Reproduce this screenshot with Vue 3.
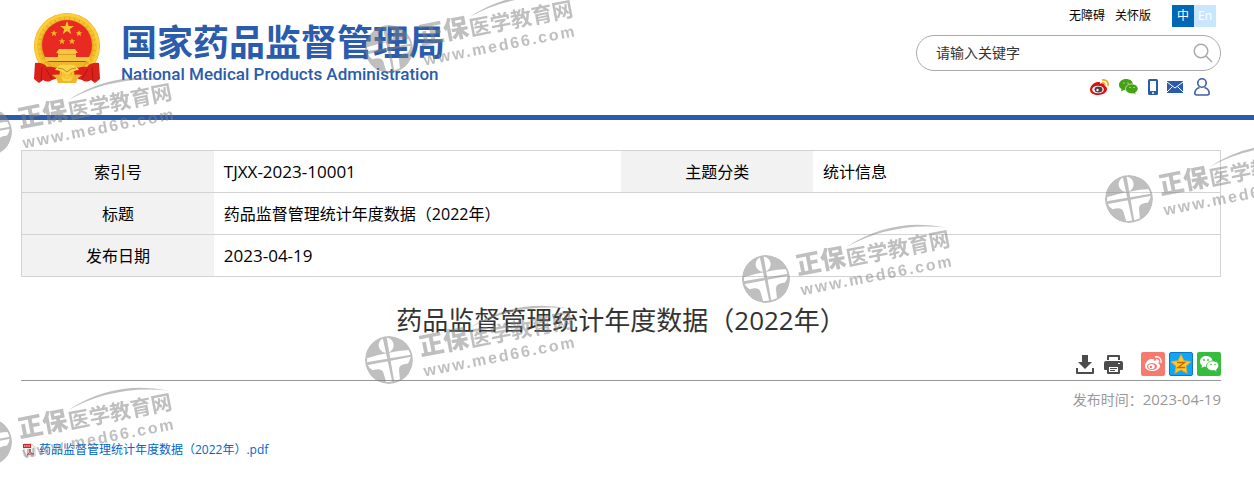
<script setup>
import { ref } from 'vue';

const keyword = ref('');

const watermarks = [
  { x: 389, y: 49 },
  { x: -12, y: 132 },
  { x: 1129, y: 199 },
  { x: 766, y: 279 },
  { x: 389, y: 360 },
  { x: -12, y: 442 },
];
</script>

<template>
  <div class="page">
    <header class="header">
      <a class="brand" href="#">
        <svg class="emblem" viewBox="0 0 66 70" aria-hidden="true">
          <circle cx="33" cy="33" r="33" fill="#e9a81c" />
          <circle cx="33" cy="33" r="31" fill="none" stroke="#f9cf3a" stroke-width="3" />
          <circle cx="33" cy="33" r="28" fill="none" stroke="#f4c12f" stroke-width="3" stroke-dasharray="4 1" />
          <circle cx="33" cy="32" r="25" fill="#e92a22" />
          <path d="M33 8l1.700 5h5.300l-4.300 3.200 1.700 5-4.400-3.100-4.400 3.100 1.700-5-4.300-3.200h5.300z" fill="#f5c52d" />
          <g fill="#f3b72d">
            <path id="star" d="M20 17l.9 2.300h2.400l-1.900 1.500.7 2.400-2.100-1.400-2.100 1.400.7-2.400-1.900-1.500h2.400z" />
            <use href="#star" x="25" />
            <use href="#star" x="8" y="8" />
            <use href="#star" x="18" y="8" />
          </g>
          <path d="M25 36h16l3 4h-2v4h14v4H11v-4h13v-4h-2z" fill="#f4c63d" />
          <path d="M24 41h18v1H24z" fill="#e29a28" />
          <path d="M14 49h38l-4 5H18z" fill="#f0b52b" />
          <path d="M1 50Q9 49 13 54Q21 53 26 58Q26 66 18 67Q14 70 9 67L5 70L0 66Z" fill="#dc211b" />
          <path d="M65 50Q57 49 53 54Q45 53 40 58Q40 66 48 67Q52 70 57 67L61 70L66 66Z" fill="#dc211b" />
          <path d="M8 54L7 68M12 56L18 66M58 54L59 68M54 56L48 66" stroke="#ad1512" fill="none" />
          <path d="M21 57Q25 50 33 52Q41 50 45 57Q40 57 33 62Q26 57 21 57Z" fill="#f9d34a" />
          <path d="M24 55l5 1 4 3 4-3 5-1" fill="none" stroke="#cf8a1c" />
          <path d="M18 62Q28 60 33 66Q38 60 48 62L44 65L42 70H24L22 65Z" fill="#f0b52b" />
          <path d="M27 63l6 3 6-3-2 5h-8z" fill="#f9d34a" />
        </svg>
        <span class="brand-text">
          <strong class="brand-cn">国家药品监督管理局</strong>
          <span class="brand-en">National Medical Products Administration</span>
        </span>
      </a>

      <div class="tools">
        <nav class="top-links">
          <a href="#">无障碍</a>
          <a href="#">关怀版</a>
          <span class="lang">
            <a class="lang-cn" href="#">中</a><a class="lang-en" href="#">En</a>
          </span>
        </nav>
        <form class="search" @submit.prevent>
          <input v-model="keyword" type="text" placeholder="请输入关键字" aria-label="请输入关键字" />
          <button type="submit" aria-label="搜索">
            <svg viewBox="0 0 20 20" width="20" height="20" fill="none" stroke="#aaa" stroke-width="1.500">
              <circle cx="8" cy="8" r="6.800" />
              <path d="M13 13l6 6" />
            </svg>
          </button>
        </form>
        <nav class="social">
          <a href="#" aria-label="微博">
            <svg viewBox="0 0 20 18" width="20" height="18">
              <path d="M8 4C4 4 0 8 0 12c0 3 4 5 8 5 5 0 9-3 9-6 0-2-1-2-2-3 1-3-2-4-5-2 1-2-1-2-2-2z" fill="#e00d10" />
              <ellipse cx="8" cy="11.500" rx="5.800" ry="3.800" fill="#fff" />
              <ellipse cx="8.500" cy="11.500" rx="4" ry="3" fill="#444" />
              <circle cx="7.500" cy="12" r="1.200" fill="#fff" />
              <path d="M12 2c4-1 7 2 6 6M12 5c2-.5 3 .8 2.800 2.500" fill="none" stroke="#f0a81c" stroke-width="1.700" />
            </svg>
          </a>
          <a href="#" aria-label="微信">
            <svg viewBox="0 0 20 16" width="20" height="16">
              <path d="M7 0C3 0 0 2.500 0 6c0 2 1 3 2.500 4L2 12.500 5 11c5 1 9-1 9-5S11 0 7 0z" fill="#46a215" />
              <path d="M13 5c-4 0-6.500 2-6.500 5s4 5.500 8 4.500l2.500 1-.5-2c5-3 2-8.500-3.500-8.500z" fill="#46a215" stroke="#fff" stroke-width=".6" />
              <g fill="#fff"><circle cx="5" cy="4" r=".6" /><circle cx="9" cy="4" r=".6" /><circle cx="11" cy="8.500" r=".6" /><circle cx="15" cy="8.500" r=".6" /></g>
            </svg>
          </a>
          <a href="#" aria-label="手机">
            <svg viewBox="0 0 10 16" width="10" height="16">
              <rect width="10" height="16" rx="1.500" fill="#2a5bac" />
              <path d="M2 2h6v10H2z" fill="#fff" />
              <circle cx="5" cy="14" r="1" fill="#fff" />
            </svg>
          </a>
          <a href="#" aria-label="邮箱">
            <svg viewBox="0 0 16 12" width="16" height="12">
              <path d="M0 0h16v12H0z" fill="#2a5bac" />
              <path d="M0 1l8 6 8-6M0 11l5.500-5.500M16 11l-5.500-5.500" fill="none" stroke="#fff" />
            </svg>
          </a>
          <a class="user" href="#" aria-label="个人中心">
            <svg viewBox="0 0 16 18" width="16" height="18" fill="none" stroke="#3f5ea9" stroke-width="1.600">
              <ellipse cx="8" cy="5" rx="4.200" ry="4.200" />
              <path d="M5.500 9.500Q1 11 .8 15q0 2 2 2h10.400q2 0 2-2-.2-4-4.700-5.500" />
            </svg>
          </a>
        </nav>
      </div>
    </header>

    <main class="content">
      <table class="info">
        <tbody>
          <tr>
            <th scope="row">索引号</th>
            <td class="latin">TJXX-2023-10001</td>
            <th scope="row">主题分类</th>
            <td>统计信息</td>
          </tr>
          <tr>
            <th scope="row">标题</th>
            <td colspan="3">药品监督管理统计年度数据（2022年）</td>
          </tr>
          <tr>
            <th scope="row">发布日期</th>
            <td class="latin" colspan="3">2023-04-19</td>
          </tr>
        </tbody>
      </table>

      <h1 class="title">药品监督管理统计年度数据（2022年）</h1>

      <div class="actions">
        <button type="button" aria-label="下载">
          <svg viewBox="0 0 18 19" width="18" height="19" fill="#4c4c4c">
            <path d="M6 0h6v7h4l-7 7-7-7h4z" />
            <path d="M0 13h2v4h14v-4h2v5q0 1-1 1H1q-1 0-1-1z" />
          </svg>
        </button>
        <button type="button" aria-label="打印">
          <svg viewBox="0 0 19 19" width="19" height="19" fill="#4c4c4c">
            <path d="M3 5V1q0-1 1-1h11q1 0 1 1v4h-2V2H5v3z" />
            <path d="M2 6h15q2 0 2 2v6q0 1-1 1h-2v-4H3v4H1q-1 0-1-1V8q0-2 2-2z" />
            <path d="M3 10h13v8q0 1-1 1H4q-1 0-1-1zm2 2v5h9v-5zm1 1h7v1H6zm0 2h5v1H6z" fill-rule="evenodd" />
            <path d="M14 8h2v1h-2z" fill="#fff" />
          </svg>
        </button>
        <a class="share share-first" href="#" aria-label="分享到微博">
          <svg viewBox="0 0 24 24" width="24" height="24">
            <rect width="24" height="24" rx="2" fill="#f67a6d" />
            <path d="M10 7c-3 0-6 4-6 7 0 4 5 5 8 5 4 0 7-3 7-5s-1-2-2-3c1-2-1-3-4-2 1-2-1-2-3-2z" fill="#fff" />
            <ellipse cx="11" cy="14.500" rx="5" ry="3.500" fill="#f67a6d" />
            <ellipse cx="10.500" cy="14.500" rx="3.200" ry="2.600" fill="#fff" />
            <circle cx="10" cy="15" r="1.200" fill="#f67a6d" />
            <path d="M14 5c4-1 7 2 6 6M15 8c2-.4 3 1 2.500 2.500" fill="none" stroke="#fff" stroke-width="1.400" />
          </svg>
        </a>
        <a class="share" href="#" aria-label="分享到QQ空间">
          <svg viewBox="0 0 24 24" width="24" height="24">
            <rect x=".5" y=".5" width="23" height="23" rx="1.500" fill="#11a5f5" stroke="#0b77c8" />
            <path d="M12 2.500l2.900 6.200 7 1-5 4.600 1.200 7-6.100-3.500-6.100 3.500 1.200-7-5-4.600 7-1z" fill="#fdcb25" stroke="#f3a51a" stroke-width=".8" />
            <path d="M8 10.500h7.500L9 15.500h7" fill="none" stroke="#c8660e" stroke-width="1.400" />
          </svg>
        </a>
        <a class="share" href="#" aria-label="分享到微信">
          <svg viewBox="0 0 24 24" width="24" height="24">
            <rect width="24" height="24" rx="2" fill="#36bd3d" />
            <path d="M9 4c-4 0-6 2.500-6 5.500 0 2 1 3 2 4L4.500 16 7 14.500c5 1 8.500-1 8.500-5S12 4 9 4z" fill="#fff" />
            <path d="M16 9c-4 0-6.500 2-6.500 5s4 5.500 8 4.500l2.500 1.500-.5-2.500C24 14 21.500 9 16 9z" fill="#fff" stroke="#36bd3d" stroke-width=".8" />
            <g fill="#36bd3d"><circle cx="7" cy="8" r=".9" /><circle cx="11" cy="8" r=".9" /><circle cx="14" cy="12.500" r=".8" /><circle cx="18" cy="12.500" r=".8" /></g>
          </svg>
        </a>
      </div>

      <p class="published">发布时间：<time class="num" datetime="2023-04-19">2023-04-19</time></p>

      <a class="attachment" href="#">
        <svg viewBox="0 0 16 16" width="16" height="16" aria-hidden="true">
          <path d="M3 2h8l3 3v9H3z" fill="#f4f4f4" stroke="#ccc" />
          <path d="M2 2h8v4H2z" fill="#d0232a" />
          <path d="M3 4h6" stroke="#fff" stroke-dasharray="1.500 .7" />
          <path d="M6 13c2-2 4-4 3-6-1 3 2 5 4 5-2-.5-5 0-7 1z" fill="none" stroke="#d0232a" />
        </svg>
        <span>药品监督管理统计年度数据（2022年）.pdf</span>
      </a>
    </main>

    <!-- site stamp scattered over the page -->
    <svg class="stamps" aria-hidden="true">
      <defs>
        <mask id="figure" maskUnits="userSpaceOnUse" x="-26" y="-26" width="52" height="52">
          <circle r="24" fill="#fff" />
          <ellipse cy="-15" rx="7.500" ry="7.500" fill="#000" />
          <path d="M-21-6Q-12-7-7-7H7Q12-7 21-6Q24 2 18 7Q9 6 8 11L7 21Q0 23-7 21L-8 11Q-9 6-18 7Q-24 2-21-6Z" fill="#000" />
          <path d="M-2-24H2L1 24H-1ZM-24-2L24-1V1L-24 1Z" fill="#fff" />
        </mask>
      </defs>
      <g v-for="(mark, i) in watermarks" :key="i" :transform="`translate(${mark.x} ${mark.y}) rotate(-11)`">
        <circle r="24" mask="url(#figure)" />
        <path d="M85-16Q135-37 187-16Q135-32 85-16Z" />
        <text class="stamp-lead" x="32" y="2">正保</text>
        <text class="stamp-name" x="83" y="3">医学教育网</text>
        <text class="stamp-site" x="32" y="23">www.med66.com</text>
      </g>
    </svg>
  </div>
</template>

<style>
body {
  margin: 0;
  background: #fff;
}
</style>

<style scoped>
.page {
  position: relative;
  min-height: 100vh;
  overflow: hidden;
  color: #000;
  font-family: "Open Sans", "Noto Sans CJK SC", sans-serif;
}

a {
  color: inherit;
  text-decoration: none;
}

button {
  padding: 0;
  border: 0;
  background: none;
  cursor: pointer;
}

svg {
  display: block;
}

.header {
  display: flex;
  justify-content: space-between;
  box-sizing: border-box;
  height: 120px;
  padding: 0 33px 0 34px;
  border-bottom: 5px solid #2a5bac;
}

.brand {
  display: flex;
  align-items: flex-start;
  gap: 21px;
  padding-top: 13px;
  color: #2a5bac;
}

.emblem {
  width: 66px;
  height: 70px;
}

.brand-text {
  display: flex;
  flex-direction: column;
  padding-top: 5px;
}

.brand-cn {
  font: bold 36px/44px "Noto Sans CJK SC", sans-serif;
}

.brand-en {
  font: 500 17px/24px Roboto, sans-serif;
}

.tools {
  display: flex;
  flex-direction: column;
  align-items: flex-end;
  width: 305px;
  padding-top: 5px;
}

.top-links {
  display: flex;
  gap: 10px;
  margin-right: 5px;
  font-size: 12px;
  line-height: 22px;
}

.lang {
  display: flex;
  margin-left: 11px;
  color: #fff;
  text-align: center;
}

.lang-cn,
.lang-en {
  width: 22px;
}

.lang-cn {
  background: #0068b7;
}

.lang-en {
  background: #c9e6ff;
}

.search {
  display: flex;
  align-items: center;
  box-sizing: border-box;
  width: 100%;
  height: 36px;
  margin-top: 8px;
  padding: 0 7px 0 19px;
  border: 1px solid #aaa;
  border-radius: 18px;
}

.search input {
  flex: 1;
  min-width: 0;
  padding: 0;
  border: 0;
  outline: 0;
  background: none;
  font: 14px/20px "Open Sans", "Noto Sans CJK SC", sans-serif;
}

.search input::placeholder {
  color: #333;
  opacity: 1;
}

.social {
  display: flex;
  align-items: center;
  gap: 9px;
  margin: 7px 11px 0 0;
}

.user {
  margin-left: 2px;
}

.content {
  margin: 30px 33px 0 21px;
}

.info {
  width: 100%;
  border: 1px solid #d3d3d3;
  border-collapse: collapse;
  table-layout: fixed;
  font-size: 16px;
  line-height: 24px;
}

.info tr {
  height: 42px;
  border-bottom: 1px solid #d3d3d3;
}

.info th {
  width: 16%;
  padding: 0;
  background: #f2f2f2;
  font-weight: 400;
}

.info td {
  padding: 0 10px;
}

.info .latin {
  font-size: 17px;
}

.title {
  margin: 23px 0 0;
  color: #333;
  font-size: 26px;
  font-weight: 400;
  line-height: 40px;
  text-align: center;
}

.actions {
  display: flex;
  align-items: center;
  justify-content: flex-end;
  gap: 10px;
  box-sizing: border-box;
  height: 41px;
  padding-top: 8px;
  border-bottom: 1px solid #999;
}

.share + .share {
  margin-left: -6px;
}

.share-first {
  margin-left: 8px;
}

.published {
  margin: 7px 0 0;
  color: #999;
  font-size: 14px;
  line-height: 22px;
  text-align: right;
}

.published .num {
  font-size: 15px;
}

.attachment {
  display: inline-flex;
  align-items: center;
  gap: 2px;
  margin-top: 29px;
  color: #0066cc;
  font-size: 12px;
  line-height: 20px;
}

.stamps {
  position: absolute;
  top: 0;
  left: 0;
  width: 100%;
  height: 100%;
  fill: #808080;
  opacity: 0.5;
  pointer-events: none;
}

.stamp-lead {
  font: 900 25px "Noto Sans CJK SC", sans-serif;
}

.stamp-name {
  font: bold 21px "Noto Sans CJK SC", sans-serif;
}

.stamp-site {
  font: bold 16px "Liberation Sans", sans-serif;
  letter-spacing: 2px;
}
</style>
